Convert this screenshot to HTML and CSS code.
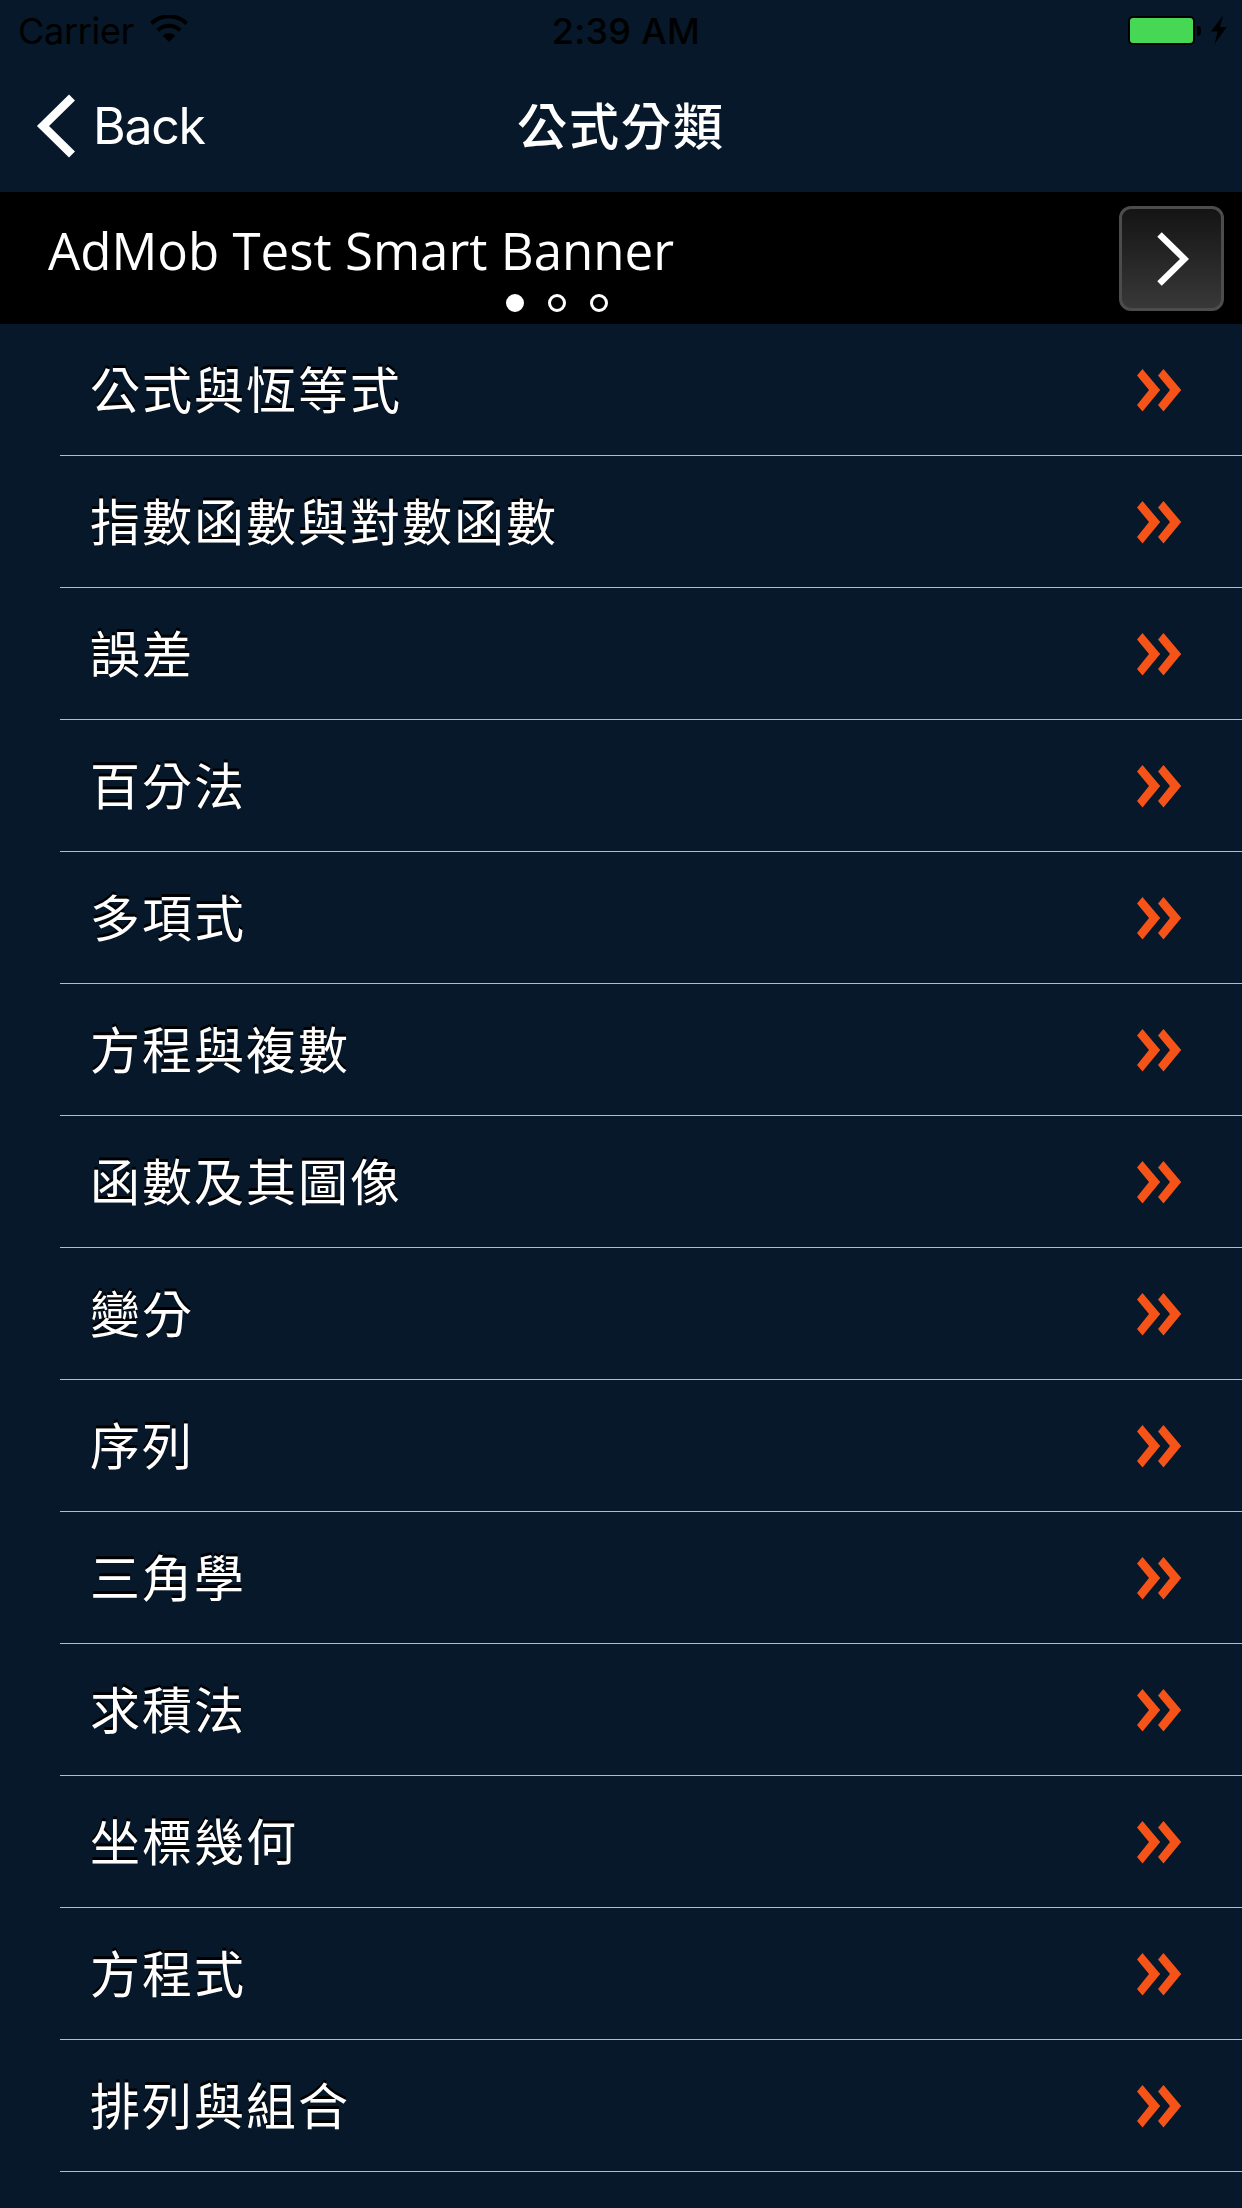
FILE: index.html
```html
<!DOCTYPE html>
<html lang="zh-Hant">
<head>
  <meta charset="UTF-8" />
  <meta name="viewport" content="width=device-width, initial-scale=1" />
  <title>公式分類</title>
  <link rel="stylesheet" href="styles.css">
</head>
<body>
  <svg class="defs" width="0" height="0">
    <symbol id="more" viewBox="0 0 46 44">
      <path d="M1 7.5L6.5 1L24.2 22L6.5 43.5L1 37L13 22Z"/>
      <path d="M22 7.5L27.5 1L45.2 22L27.5 43.5L22 37L34 22Z"/>
    </symbol>
  </svg>

  <header class="header">
    <div class="status">
      <div class="status-left">
        <span class="carrier">Carrier</span>
        <svg class="wifi" width="38" height="28" viewBox="0 0 38 28">
          <path d="M1.5 8.5A25 25 0 0 1 36.5 8.5" fill="none" stroke="#000" stroke-width="4"/>
          <path d="M7.8 15.3A16 16 0 0 1 30.2 15.3" fill="none" stroke="#000" stroke-width="4"/>
          <path d="M19 27L12.8 20.8A9 9 0 0 1 25.2 20.8Z"/>
        </svg>
      </div>
      <span class="time">2:39 AM</span>
      <div class="status-right">
        <div class="battery"></div>
        <div class="battery-tip"></div>
        <svg class="bolt" width="16" height="30" viewBox="0 0 16 30">
          <path d="M12 0.5L0 16.5H6.8L3.5 29L15.7 12H9Z"/>
        </svg>
      </div>
    </div>
    <nav class="nav">
      <a class="back">
        <svg width="40" height="64" viewBox="0 0 40 64">
          <path d="M36 3.5L7 32L36 60.5" fill="none" stroke="#fff" stroke-width="8.5"/>
        </svg>
        <span>Back</span>
      </a>
      <h1 class="title">公式分類</h1>
    </nav>
  </header>

  <div class="banner">
    <div class="banner-body">
      <div class="banner-text">AdMob Test Smart Banner</div>
      <div class="dots">
        <span class="dot active"></span>
        <span class="dot"></span>
        <span class="dot"></span>
      </div>
    </div>
    <button class="banner-button">
      <svg width="32" height="54" viewBox="0 0 32 54">
        <path d="M2.5 2.5L27.5 27L2.5 51.5" fill="none" stroke="#fff" stroke-width="6.4"/>
      </svg>
    </button>
  </div>

  <ul class="list">
    <li class="row"><span>公式與恆等式</span><svg class="more"><use href="#more"/></svg></li>
    <li class="row"><span>指數函數與對數函數</span><svg class="more"><use href="#more"/></svg></li>
    <li class="row"><span>誤差</span><svg class="more"><use href="#more"/></svg></li>
    <li class="row"><span>百分法</span><svg class="more"><use href="#more"/></svg></li>
    <li class="row"><span>多項式</span><svg class="more"><use href="#more"/></svg></li>
    <li class="row"><span>方程與複數</span><svg class="more"><use href="#more"/></svg></li>
    <li class="row"><span>函數及其圖像</span><svg class="more"><use href="#more"/></svg></li>
    <li class="row"><span>變分</span><svg class="more"><use href="#more"/></svg></li>
    <li class="row"><span>序列</span><svg class="more"><use href="#more"/></svg></li>
    <li class="row"><span>三角學</span><svg class="more"><use href="#more"/></svg></li>
    <li class="row"><span>求積法</span><svg class="more"><use href="#more"/></svg></li>
    <li class="row"><span>坐標幾何</span><svg class="more"><use href="#more"/></svg></li>
    <li class="row"><span>方程式</span><svg class="more"><use href="#more"/></svg></li>
    <li class="row"><span>排列與組合</span><svg class="more"><use href="#more"/></svg></li>
  </ul>
</body>
</html>
```
FILE: styles.css
```css
* {
  box-sizing: border-box;
}

body {
  margin: 0;
  height: 2208px;
  overflow: hidden;
  background-color: #061829;
  color: #fff;
  font-family: Inter, "Noto Sans CJK TC", sans-serif;
}

svg {
  display: block;
}

.defs {
  display: none;
}

.header {
  height: 192px;
}

.status {
  display: grid;
  grid-template-columns: 1fr auto 1fr;
  align-items: center;
  height: 62px;
  padding: 0 15px 0 18px;
  color: #000;
  font-size: 36px;
  line-height: 62px;
}

.status-left,
.status-right {
  display: flex;
  align-items: center;
}

.status-right {
  justify-content: flex-end;
}

.carrier {
  letter-spacing: -0.3px;
}

.wifi {
  margin-left: 16px;
  margin-bottom: 4px;
}

.time {
  padding-left: 7px;
  font-weight: 500;
  letter-spacing: 0.3px;
}

.battery {
  width: 67px;
  height: 29px;
  border: 2px solid #000;
  border-radius: 5px;
  background-color: #46d854;
}

.battery-tip {
  width: 4px;
  height: 10px;
  margin-left: 2px;
  border-radius: 0 4px 4px 0;
  background-color: #000;
}

.bolt {
  margin-left: 10px;
  margin-bottom: 3px;
}

.status-right .battery,
.status-right .battery-tip {
  margin-bottom: 1px;
}

.nav {
  display: grid;
  grid-template-columns: 1fr auto 1fr;
  align-items: center;
  height: 130px;
  padding: 0 36px;
}

.back {
  display: flex;
  align-items: center;
  margin-bottom: 2px;
  font-size: 50px;
  line-height: 64px;
}

.back span {
  margin-left: 17px;
  letter-spacing: -1.3px;
}

.title {
  margin: 0;
  font-size: 50px;
  font-weight: 500;
  letter-spacing: 2px;
  line-height: 64px;
}

.banner {
  display: flex;
  height: 132px;
  padding: 14px 18px 0 48px;
  background-color: #000;
}

.banner-body {
  display: flex;
  flex-direction: column;
  flex: 1;
}

.banner-text {
  height: 88px;
  font-family: "Open Sans", sans-serif;
  font-size: 51px;
  line-height: 88px;
}

.dots {
  display: flex;
  gap: 24px;
  padding-left: 458px;
}

.dot {
  width: 18px;
  height: 18px;
  border: 3px solid #fff;
  border-radius: 50%;
}

.dot.active {
  background-color: #fff;
}

.banner-button {
  display: flex;
  align-items: center;
  justify-content: center;
  width: 105px;
  height: 105px;
  padding: 0 0 0 2px;
  border: 3px solid #4c4c4c;
  border-radius: 12px;
  background: linear-gradient(#141414, #383838);
}

.list {
  margin: 0;
  padding: 0 0 0 60px;
  list-style: none;
}

.row {
  display: flex;
  align-items: center;
  justify-content: space-between;
  height: 132px;
  padding: 0 60px 0 30px;
  border-bottom: 1px solid #b6bac1;
  font-family: "Noto Sans CJK TC", sans-serif;
  font-size: 50px;
  letter-spacing: 2px;
  text-shadow: 0 -3px 0 #000;
}

.row span {
  padding-bottom: 5px;
}

.more {
  width: 46px;
  height: 44px;
  fill: #f55318;
}
```
